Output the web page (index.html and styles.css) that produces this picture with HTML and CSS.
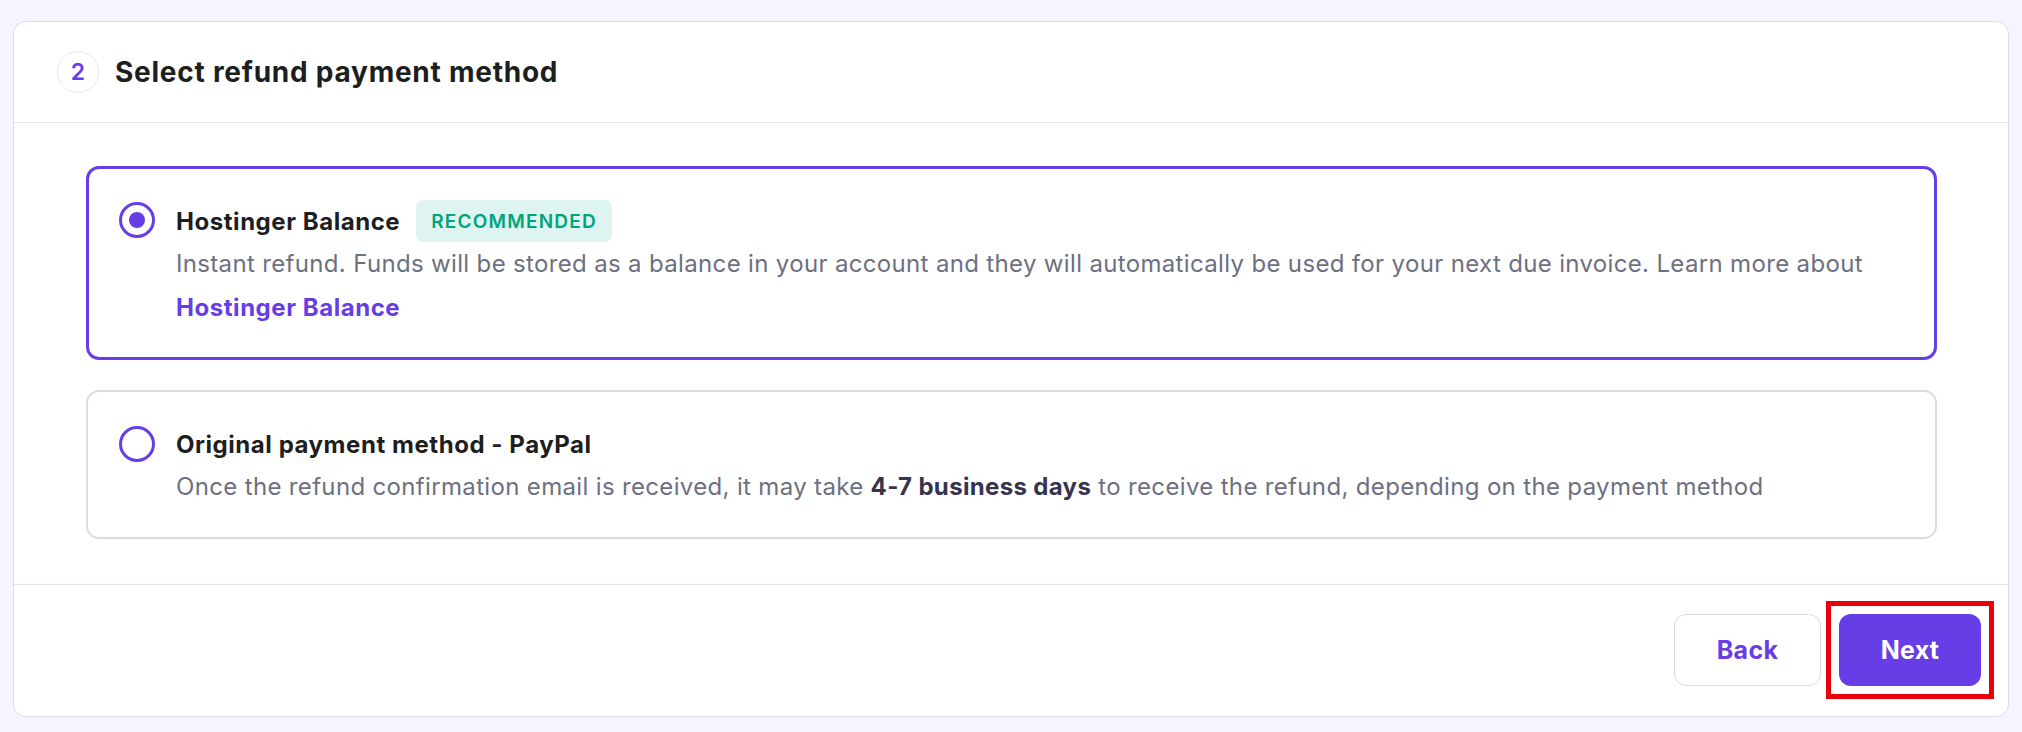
FILE: index.html
```html
<!DOCTYPE html>
<html lang="en">
<head>
<meta charset="utf-8">
<title>Select refund payment method</title>
<link rel="stylesheet" href="styles.css">
</head>
<body>
<div class="page">
  <section class="card">
    <header class="card-head">
      <span class="step">2</span>
      <h2 class="card-title">Select refund payment method</h2>
    </header>
    <div class="card-body">
      <label class="option option-selected">
        <span class="radio radio-on"><span class="radio-dot"></span></span>
        <span class="option-text">
          <span class="option-title-row">
            <span class="option-title">Hostinger Balance</span>
            <span class="badge">RECOMMENDED</span>
          </span>
          <span class="option-desc">Instant refund. Funds will be stored as a balance in your account and they will automatically be used for your next due invoice. Learn more about</span>
          <a class="option-link" href="#">Hostinger Balance</a>
        </span>
      </label>
      <label class="option">
        <span class="radio"></span>
        <span class="option-text">
          <span class="option-title-row">
            <span class="option-title">Original payment method - PayPal</span>
          </span>
          <span class="option-desc">Once the refund confirmation email is received, it may take <b>4-7 business days</b> to receive the refund, depending on the payment method</span>
        </span>
      </label>
    </div>
    <footer class="card-foot">
      <button class="btn btn-secondary" type="button">Back</button>
      <button class="btn btn-primary" type="button">Next</button>
    </footer>
  </section>
</div>
</body>
</html>
```

FILE: styles.css
```css
* { box-sizing: border-box; }

html, body {
  margin: 0;
  padding: 0;
  background: #f4f5ff;
  font-family: "Inter", "Noto Sans", "DejaVu Sans", sans-serif;
  color: #1d1e20;
}

.page {
  padding: 21px 13px 19px 13px;
}

.card {
  background: #fff;
  border: 1px solid #dcdde6;
  border-radius: 13px;
  display: flex;
  flex-direction: column;
}

.card-head {
  height: 101px;
  display: flex;
  align-items: center;
  gap: 16px;
  padding-left: 43px;
  border-bottom: 1px solid #e1e2ea;
}

.step {
  width: 42px;
  height: 42px;
  border-radius: 50%;
  border: 1px solid #e9e9f2;
  display: flex;
  align-items: center;
  justify-content: center;
  color: #673de6;
  font-size: 23px;
  font-weight: 600;
}

.card-title {
  margin: 0;
  font-size: 28px;
  font-weight: 700;
  letter-spacing: 0.75px;
  color: #1d1e20;
}

.card-body {
  padding: 43px 71px 45px 72px;
  display: flex;
  flex-direction: column;
  gap: 30px;
}

.option {
  display: flex;
  align-items: flex-start;
  gap: 21px;
  border: 2px solid #dadce0;
  border-radius: 13px;
  padding: 32px 30px 29px 31px;
  cursor: pointer;
}

.option-selected {
  border: 3px solid #673de6;
  padding: 31px 30px 27px 30px;
}

.radio {
  flex: none;
  width: 36px;
  height: 36px;
  border-radius: 50%;
  border: 3px solid #673de6;
  display: flex;
  align-items: center;
  justify-content: center;
  margin-top: 2px;
}

.radio-dot {
  width: 16px;
  height: 16px;
  border-radius: 50%;
  background: #673de6;
}

.option-text {
  display: flex;
  flex-direction: column;
}

.option-title-row {
  display: flex;
  align-items: center;
  gap: 16px;
  min-height: 41px;
}

.option-title {
  font-size: 24px;
  font-weight: 700;
  letter-spacing: 0.55px;
  color: #1d1e20;
}

.badge {
  background: #def4f0;
  color: #00a47a;
  font-size: 19px;
  font-weight: 600;
  letter-spacing: 1.2px;
  border-radius: 7px;
  height: 42px;
  padding: 0 15px;
  display: flex;
  align-items: center;
}

.option-desc {
  font-size: 24px;
  letter-spacing: 0.34px;
  line-height: 43px;
  color: #6d7081;
}

.option-desc b {
  color: #36344d;
  font-weight: 700;
}

.option-link {
  font-size: 24px;
  font-weight: 700;
  letter-spacing: 0.55px;
  line-height: 45px;
  color: #673de6;
  text-decoration: none;
}

.card-foot {
  border-top: 1px solid #e1e2ea;
  display: flex;
  justify-content: flex-end;
  gap: 18px;
  padding: 29px 27px 30px 0;
}

.btn {
  height: 72px;
  border-radius: 12px;
  font-family: inherit;
  font-size: 25px;
  font-weight: 700;
  letter-spacing: 0.3px;
  cursor: pointer;
}

.btn-secondary {
  width: 147px;
  background: #fff;
  border: 1px solid #dadce0;
  color: #673de6;
}

.btn-primary {
  position: relative;
  width: 142px;
  background: #673de6;
  border: none;
  color: #fff;
}

.btn-primary::after {
  content: "";
  position: absolute;
  top: -13px;
  right: -13px;
  bottom: -13px;
  left: -13px;
  border: 5px solid #e8000b;
  pointer-events: none;
}
```
